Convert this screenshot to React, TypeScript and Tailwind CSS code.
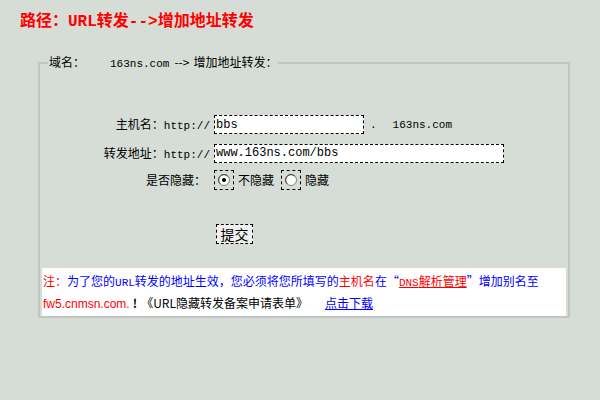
import React from 'react';

const cjk = "font-['SimSun','Noto_Sans_CJK_SC',sans-serif]";
const mono = "font-['Liberation_Mono','Noto_Sans_CJK_SC',monospace]";

const Radio = ({ checked }: { checked: boolean }) => (
  <span className="flex h-[20px] w-[20px] items-center justify-center border border-dashed border-black">
    <svg width="12" height="12" viewBox="0 0 12 12">
      <circle cx="6" cy="6" r="5.5" fill="#fff" stroke="#808080" />
      <path d="M2.2 9.8 A5 5 0 0 1 9.8 2.2" fill="none" stroke="#404040" strokeWidth="1" />
      {checked && <circle cx="6" cy="6" r="2" fill="#000" />}
    </svg>
  </span>
);

const Row = ({ label, children }: { label: React.ReactNode; children: React.ReactNode }) => (
  <div className="flex items-center">
    <div className="w-[172px] shrink-0 pr-[4px] text-right">{label}</div>
    {children}
  </div>
);

const App: React.FC = () => {
  return (
    <div className={`h-[400px] w-[600px] bg-[#d5ddd6] text-[12px] text-black ${cjk}`}>
      <div className="px-[20px] pt-[9px] text-[16px] font-bold leading-[20px] text-[#ff0000]">
        路径：<span className={mono}>URL</span>转发<span className={mono}>--&gt;</span>增加地址转发
      </div>

      <fieldset className="mx-[38px] mt-[23px] w-[532px] border-2 border-[#c0c6c1] px-[2px] pb-[0px]">
        <legend className="ml-[6px] px-[1px] leading-[14px]">
          域名：<span className={`${mono} ml-[25px] text-[11px]`}>163ns.com</span>
          <span className="ml-[5px]">--&gt;</span>
          <span className="ml-[4px]">增加地址转发：</span>
        </legend>

        <div className="mt-[44px] flex flex-col gap-[9px]">
          <Row label={<>主机名：<span className={`${mono} text-[11px]`}>http://</span></>}>
            <div className={`flex h-[19px] w-[150px] items-center border border-dashed border-black bg-white px-[1px] ${mono} text-[12px]`}>
              bbs
            </div>
            <span className={`${mono} ml-[6px] text-[11px]`}>.</span>
            <span className={`${mono} ml-[16px] text-[11px]`}>163ns.com</span>
          </Row>
          <Row label={<>转发地址：<span className={`${mono} text-[11px]`}>http://</span></>}>
            <div className={`flex h-[19px] w-[290px] items-center border border-dashed border-black bg-white px-[1px] ${mono} text-[12px]`}>
              www.163ns.com/bbs
            </div>
          </Row>
          <div className="-mt-[2px] flex items-center">
            <div className="w-[172px] shrink-0 pr-[8px] text-right">是否隐藏：</div>
            <Radio checked />
            <span className="ml-[4px]">不隐藏</span>
            <span className="ml-[7px]"><Radio checked={false} /></span>
            <span className="ml-[4px]">隐藏</span>
          </div>
        </div>

        <div className="mt-[34px] pl-[174px]">
          <span className="inline-flex h-[20px] w-[37px] items-center justify-center border border-dashed border-black bg-[#f0f0f0] text-[14px] leading-none">
            提交
          </span>
        </div>

        <div className="mt-[24px] bg-white px-[1px] pb-[2px] pt-[3px] leading-[19px] text-[#0000ff]">
          <div className="whitespace-nowrap">
            <span className="text-[#ff0000]">注：</span>为了您的<span className={`${mono} text-[11px]`}>URL</span>转发的地址生效，您必须将您所填写的
            <span className="text-[#ff0000]">主机名</span>在“<a className="text-[#ff0000] underline"><span className={`${mono} text-[11px]`}>DNS</span>解析管理</a>”增加别名至
          </div>
          <div>
            <span className="font-['Liberation_Sans',sans-serif] text-[#ff0000]">fw5.cnmsn.com.</span>
            <span className="ml-[3px] font-bold text-black">!</span>
            <span className="ml-[4px] text-black">《URL隐藏转发备案申请表单》</span>
            <a className="ml-[17px] underline">点击下载</a>
          </div>
        </div>
      </fieldset>
    </div>
  );
};

export default App;
